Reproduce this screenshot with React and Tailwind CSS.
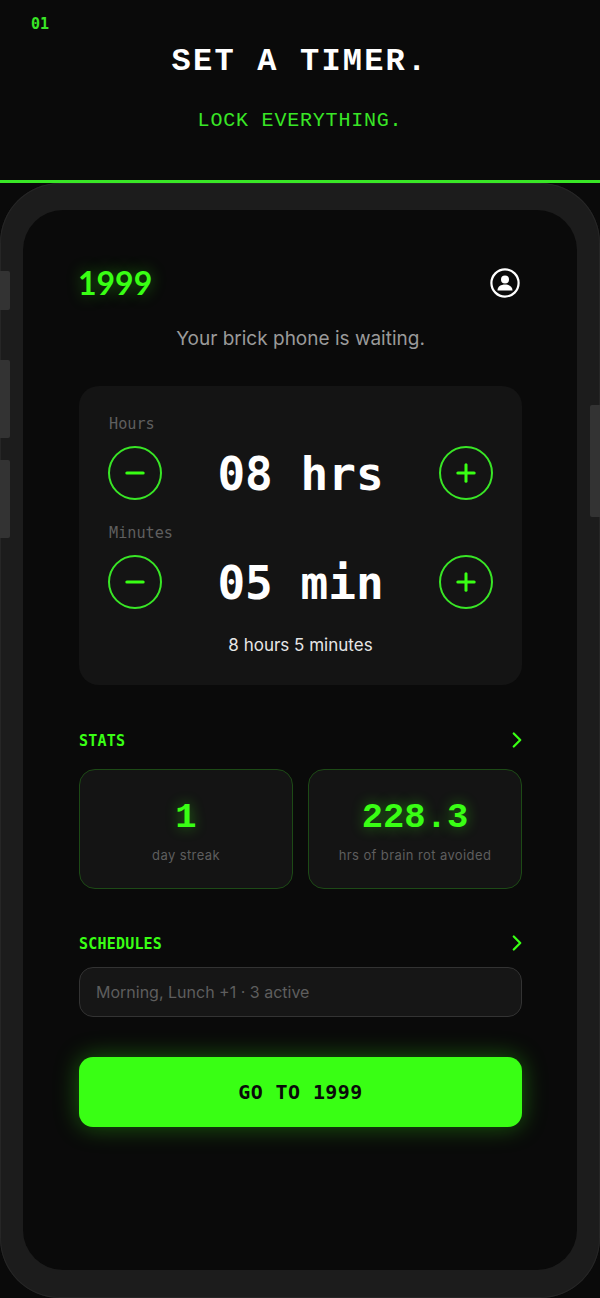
import { ChevronRight, Minus, Plus } from 'lucide-react';

const mono = "font-['DejaVu_Sans_Mono',monospace]";
const inter = "font-['Inter',sans-serif]";

function StepButton({ children }) {
    return (
        <button className="w-[54px] h-[54px] rounded-full border-2 border-[#39e626] text-[#39ff14] flex items-center justify-center">
            {children}
        </button>
    );
}

function Stepper({ label, value }) {
    return (
        <div>
            <div className={`${mono} text-[15.2px] leading-5 ml-px text-[#5f5f5f]`}>{label}</div>
            <div className="flex items-center justify-between mt-[12px]">
                <StepButton><Minus size={28} strokeWidth={2.6} /></StepButton>
                <div className={`${mono} text-[46px] leading-[54px] translate-y-px font-bold text-white`}>{value}</div>
                <StepButton><Plus size={28} strokeWidth={2.6} /></StepButton>
            </div>
        </div>
    );
}

function SectionHead({ title }) {
    return (
        <div className="flex items-center justify-between h-5">
            <span className={`${mono} text-[15px] pt-[2px] font-bold text-[#39ff14] tracking-[0.2px]`}>{title}</span>
            <ChevronRight size={26} strokeWidth={2.1} className="text-[#39ff14] -mr-[8px]" />
        </div>
    );
}

function StatCard({ value, label }) {
    return (
        <div className="flex-1 h-[120px] rounded-[16px] border border-[#1d4a16] bg-[#141414] flex flex-col items-center pt-[27px]">
            <div className="font-['Liberation_Mono',monospace] text-[35.5px] leading-[42px] font-bold text-[#39ff14] [text-shadow:0_0_14px_rgba(57,255,20,0.45)]">{value}</div>
            <div className={`${inter} text-[13px] leading-5 tracking-[0.4px] text-[#5e5e5e] mt-[6px]`}>{label}</div>
        </div>
    );
}

export default function App() {
    return (
        <div className="w-[600px] h-[1298px] bg-[#0a0a0a] overflow-hidden">
            <div className="relative h-[183px] border-b-[3px] border-[#39e626] flex flex-col items-center pt-[40px]">
                <div className={`${mono} absolute left-[31px] top-[16px] text-[15px] leading-4 font-bold text-[#39e626]`}>01</div>
                <div className="font-['Liberation_Mono',monospace] text-[32px] leading-[44px] font-bold text-white tracking-[2.2px]">SET A TIMER.</div>
                <div className="font-['Liberation_Mono',monospace] text-[20px] leading-7 text-[#39e626] tracking-[0.8px] mt-[23px]">LOCK EVERYTHING.</div>
            </div>

            <div className="relative h-[1115px] bg-[#1c1c1c] shadow-[inset_0_0_0_1px_#262626] rounded-[60px] px-[23px] pt-[27px] pb-[28px]">
                <div className="absolute left-0 top-[88px] w-[10px] h-[39px] bg-[#333333] rounded-r-[2px]"></div>
                <div className="absolute left-0 top-[177px] w-[10px] h-[78px] bg-[#333333] rounded-r-[2px]"></div>
                <div className="absolute left-0 top-[277px] w-[10px] h-[78px] bg-[#333333] rounded-r-[2px]"></div>
                <div className="absolute right-0 top-[222px] w-[10px] h-[112px] bg-[#333333] rounded-l-[2px]"></div>

                <div className="h-full bg-[#0a0a0a] rounded-[40px] pl-[56px] pr-[55px] pt-[54px]">
                    <div className="flex items-center justify-between h-[38px]">
                        <span className="font-['Lato',sans-serif] text-[32px] leading-[34px] -mt-[1px] -ml-px font-bold text-[#39ff14] [text-shadow:0_0_16px_rgba(57,255,20,0.4)]">1999</span>
                        <svg width="30" height="30" viewBox="0 0 30 30" className="mr-[2px]">
                            <circle cx="15" cy="15" r="13.6" fill="none" stroke="#fff" strokeWidth="2.2" />
                            <circle cx="15" cy="11.5" r="4" fill="#fff" />
                            <path d="M7.5 22.5c0-4 3.4-6 7.5-6s7.5 2 7.5 6z" fill="#fff" />
                        </svg>
                    </div>
                    <p className={`${inter} text-center text-[19px] leading-7 text-[#9a9a9a] mt-[23px]`}>Your brick phone is waiting.</p>

                    <div className="bg-[#141414] rounded-[20px] h-[299px] mt-[33px] px-[29px] pt-[28px]">
                        <Stepper label="Hours" value="08 hrs" />
                        <div className="mt-[23px]">
                            <Stepper label="Minutes" value="05 min" />
                        </div>
                        <p className={`${inter} text-center text-[17px] leading-6 text-[#e6e6e6] mt-[24px]`}>8 hours 5 minutes</p>
                    </div>

                    <div className="mt-[45px]">
                        <SectionHead title="STATS" />
                    </div>
                    <div className="flex gap-[15px] mt-[19px]">
                        <StatCard value="1" label="day streak" />
                        <StatCard value="228.3" label="hrs of brain rot avoided" />
                    </div>

                    <div className="mt-[44px]">
                        <SectionHead title="SCHEDULES" />
                    </div>
                    <div className={`${inter} h-[50px] mt-[14px] rounded-[14px] border border-[#333333] bg-[#161616] flex items-center px-[16px] text-[16px] text-[#5e5e5e]`}>
                        Morning, Lunch +1 · 3 active
                    </div>

                    <button className={`${mono} w-full h-[70px] mt-[40px] rounded-[14px] bg-[#39ff14] text-[#0a0a0a] text-[20px] tracking-[0.4px] font-bold shadow-[0_0_24px_rgba(57,255,20,0.35)]`}>
                        GO TO 1999
                    </button>
                </div>
            </div>
        </div>
    );
}
